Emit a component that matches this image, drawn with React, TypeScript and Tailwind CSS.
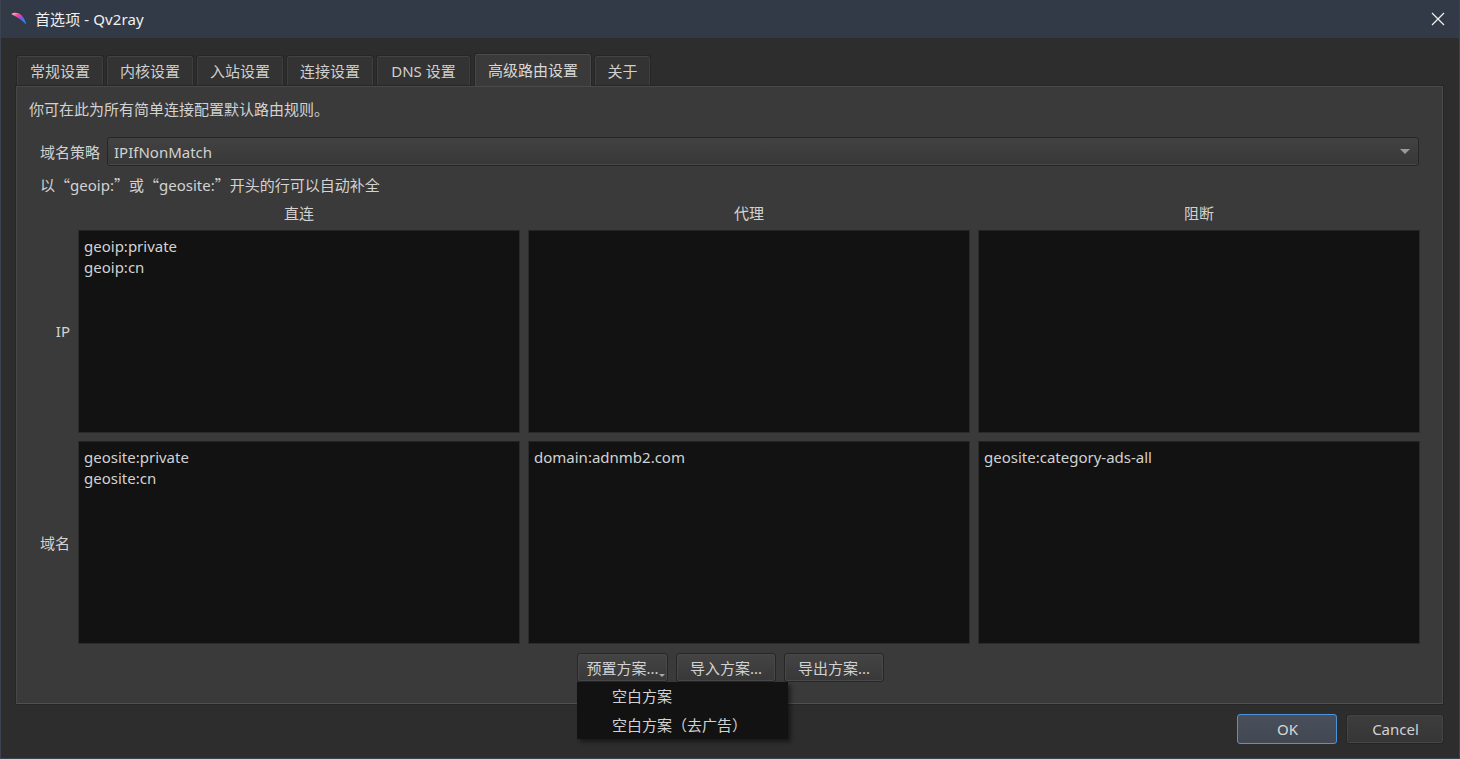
import React from "react";

const tabs = [
  { label: "常规设置", w: "w-[88px]" },
  { label: "内核设置", w: "w-[88px]" },
  { label: "入站设置", w: "w-[88px]" },
  { label: "连接设置", w: "w-[88px]" },
  { label: "DNS 设置", w: "w-[95px]" },
];

function Logo() {
  return (
    <svg width="16" height="14" viewBox="0 0 16 14" className="shrink-0">
      <defs>
        <linearGradient id="swoosh" x1="0" y1="0" x2="1" y2="1">
          <stop offset="0" stopColor="#fbd3d3" />
          <stop offset="0.3" stopColor="#f6478f" />
          <stop offset="0.55" stopColor="#8a4fe0" />
          <stop offset="0.8" stopColor="#1a8cf5" />
          <stop offset="1" stopColor="#1aa0f5" />
        </linearGradient>
      </defs>
      <path d="M0.5 2.2C2.5 0.2 7.5 0.3 10.8 3.4C12.8 5.4 14.2 8.6 15.2 12.6C12.8 9.8 10.5 8 8 6.4C5.5 4.8 3 3.4 0.5 2.2Z" fill="url(#swoosh)" />
    </svg>
  );
}

function RuleBox({ lines = [] }: { lines?: string[] }) {
  return (
    <div className="h-[203px] border border-[#2b2b2b] border-t-[#242424] bg-[#121212] px-[5px] pt-[5px] text-[15px] leading-[21px] text-[#d2d2d2]">
      {lines.map((l) => (
        <div key={l}>{l}</div>
      ))}
    </div>
  );
}

function ToolButton({ label, w, arrow }: { label: string; w: string; arrow?: boolean }) {
  return (
    <button className={`relative h-[29px] ${w} rounded-[3px] border border-[#262626] bg-gradient-to-b from-[#444444] to-[#383838] pt-[1px] text-[15px] text-[#d2d2d2] shadow-[inset_0_0_0_1px_#484848]`}>
      {label}
      {arrow && (
        <span className="absolute right-[2px] bottom-[4px] h-0 w-0 border-x-[3px] border-t-[3px] border-x-transparent border-t-[#a8a8a8]" />
      )}
    </button>
  );
}

// the quotes come from the CJK face so they stay full width, as in the dialog
function Quote({ children }: { children: string }) {
  return <span className="font-['Noto_Sans_CJK_SC']">{children}</span>;
}

export default function App() {
  return (
    <div
      lang="zh-CN"
      className="flex h-[759px] w-[1460px] flex-col overflow-hidden border-x border-b border-[#3c4350] bg-[#2d2d2d] text-[15px] text-[#d2d2d2]"
      style={{ fontFamily: '"Noto Sans", "Noto Sans CJK SC", sans-serif' }}
    >
      {/* title bar */}
      <div className="flex h-[38px] shrink-0 items-center bg-[#333a47] pl-[10px] pr-[14px]">
        <Logo />
        <span className="ml-[8px] tracking-[0.1px] text-[#f0f0f0]">首选项 - Qv2ray</span>
        <svg width="14" height="14" viewBox="0 0 14 14" className="ml-auto" fill="none" stroke="#f2f2f2" strokeWidth="1.2">
          <path d="M1 1L13 13M13 1L1 13" />
        </svg>
      </div>

      <div className="flex flex-1 flex-col pl-[14px] pr-[15px]">
        {/* tabs */}
        <div className="mt-[15px] flex h-[32px] shrink-0 items-end pl-[1px]">
          {tabs.map((t) => (
            <div
              key={t.label}
              className={`mr-[2px] flex h-[30px] ${t.w} items-center justify-center rounded-t-[3px] border border-b-0 border-[#262626] bg-[#333333] pt-[1px] text-[#cfcfcf] shadow-[inset_0_1px_0_#434343,inset_1px_0_0_#3f3f3f,inset_-1px_0_0_#3f3f3f]`}
            >
              {t.label}
            </div>
          ))}
          <div className="relative z-10 -mb-px ml-[1px] mr-[2px] flex h-[33px] w-[118px] items-center justify-center rounded-t-[3px] border border-b-0 border-[#262626] bg-[#3a3a3a] text-[#d8d8d8] shadow-[inset_0_1px_0_#4c4c4c,inset_1px_0_0_#474747,inset_-1px_0_0_#474747]">
            高级路由设置
          </div>
          <div className="flex h-[30px] w-[57px] items-center justify-center rounded-t-[3px] border border-b-0 border-[#262626] bg-[#333333] pt-[1px] text-[#cfcfcf] shadow-[inset_0_1px_0_#434343,inset_1px_0_0_#3f3f3f,inset_-1px_0_0_#3f3f3f]">
            关于
          </div>
        </div>

        {/* panel */}
        <div className="flex h-[620px] shrink-0 flex-col border border-[#262626] bg-[#3a3a3a] pl-[13px] pr-[23px] pt-[11px] shadow-[inset_0_1px_0_#4a4a4a,inset_1px_0_0_#474747,inset_-1px_0_0_#4a4a4a,inset_0_-1px_0_#505050]">
          <div className="flex h-[24px] items-center">你可在此为所有简单连接配置默认路由规则。</div>

          <div className="mt-[16px] flex h-[29px] items-center pl-[11px]">
            <span className="w-[67px] pt-[2px]">域名策略</span>
            <div className="mr-[1px] flex h-[29px] flex-1 items-center justify-between rounded-[3px] border border-[#262626] bg-gradient-to-b from-[#424242] to-[#383838] pl-[6px] pr-[8px] shadow-[inset_0_-1px_0_#484848]">
              <span className="pt-[2px]">IPIfNonMatch</span>
              <span className="h-0 w-0 border-x-[5px] border-t-[5px] border-x-transparent border-t-[#9a9a9a]" />
            </div>
          </div>

          <div className="mt-[7px] flex h-[24px] items-center pl-[11px]">
            <span>
              以<Quote>“</Quote>geoip:<Quote>”</Quote>或<Quote>“</Quote>geosite:<Quote>”</Quote>开头的行可以自动补全
            </span>
          </div>

          <div className="mt-[8px] grid grid-cols-[41px_442px_442px_442px] gap-x-[8px] gap-y-[8px]">
            <div className="h-[17px]" />
            <div className="flex h-[17px] items-center justify-center">直连</div>
            <div className="flex h-[17px] items-center justify-center">代理</div>
            <div className="flex h-[17px] items-center justify-center">阻断</div>

            <div className="flex items-center justify-end">IP</div>
            <RuleBox lines={["geoip:private", "geoip:cn"]} />
            <RuleBox />
            <RuleBox />

            <div className="flex items-center justify-end pt-[1px]">域名</div>
            <RuleBox lines={["geosite:private", "geosite:cn"]} />
            <RuleBox lines={["domain:adnmb2.com"]} />
            <RuleBox lines={["geosite:category-ads-all"]} />
          </div>

          <div className="relative mt-[9px] flex gap-[8px] pl-[548px]">
            <ToolButton label="预置方案..." w="w-[91px]" arrow />
            <ToolButton label="导入方案..." w="w-[100px]" />
            <ToolButton label="导出方案..." w="w-[100px]" />
            {/* popup menu */}
            <div className="absolute left-[548px] top-[29px] z-20 h-[57px] w-[211px] bg-[#121212] pl-[35px] text-[15px] leading-[29px] text-[#d2d2d2] shadow-[3px_3px_4px_rgba(0,0,0,0.45)]">
              <div>空白方案</div>
              <div>空白方案（去广告）</div>
            </div>
          </div>
        </div>

        {/* footer */}
        <div className="mt-[9px] flex justify-end gap-[9px]">
          <button className="h-[30px] w-[100px] rounded-[3px] border border-[#4d93d9] bg-gradient-to-b from-[#4a505b] to-[#424852] pt-[1px] pl-[1px] text-[#d8d8d8]">
            OK
          </button>
          <button className="h-[30px] w-[98px] rounded-[3px] border border-[#262626] bg-gradient-to-b from-[#3d3d3d] to-[#363636] pt-[1px] pl-[1px] text-[#d2d2d2] shadow-[inset_0_0_0_1px_#454545]">
            Cancel
          </button>
        </div>
      </div>
    </div>
  );
}
